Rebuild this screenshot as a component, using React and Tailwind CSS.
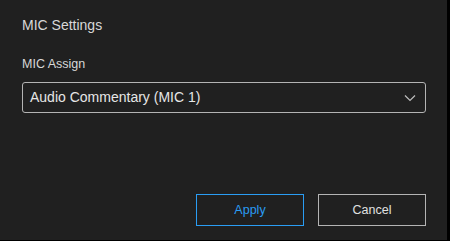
import React from 'react';

export default function App() {
  return (
    <div className="w-[450px] h-[241px] bg-black" style={{ fontFamily: '"Liberation Sans", Arial, sans-serif' }}>
      <div className="w-[447px] h-[240px] bg-[#202020] flex flex-col px-[22px]">
        <div className="pt-[17px] text-[14px] leading-[16px] text-[#d8d8d8]">MIC Settings</div>
        <div className="mt-[24px] text-[12.5px] leading-[14px] text-[#d8d8d8]">MIC Assign</div>
        <div className="mt-[11px] h-[31px] w-[404px] rounded-[3px] border border-[#b4b4b4] flex items-center justify-between pl-[7px] pr-[9px]">
          <span className="text-[14px] text-[#e6e6e6]">Audio Commentary (MIC 1)</span>
          <svg width="12" height="8" viewBox="0 0 12 8" fill="none">
            <path d="M1 1.5 L6 6.5 L11 1.5" stroke="#bdbdbd" strokeWidth="1.2" />
          </svg>
        </div>
        <div className="mt-[81px] flex justify-end gap-[14px]">
          <button className="w-[108px] h-[32px] border border-[#2a9df4] text-[12.5px] text-[#2a9df4]">Apply</button>
          <button className="w-[108px] h-[32px] border border-[#b4b4b4] text-[12.5px] text-[#e0e0e0] mr-[-1px]">Cancel</button>
        </div>
      </div>
    </div>
  );
}
